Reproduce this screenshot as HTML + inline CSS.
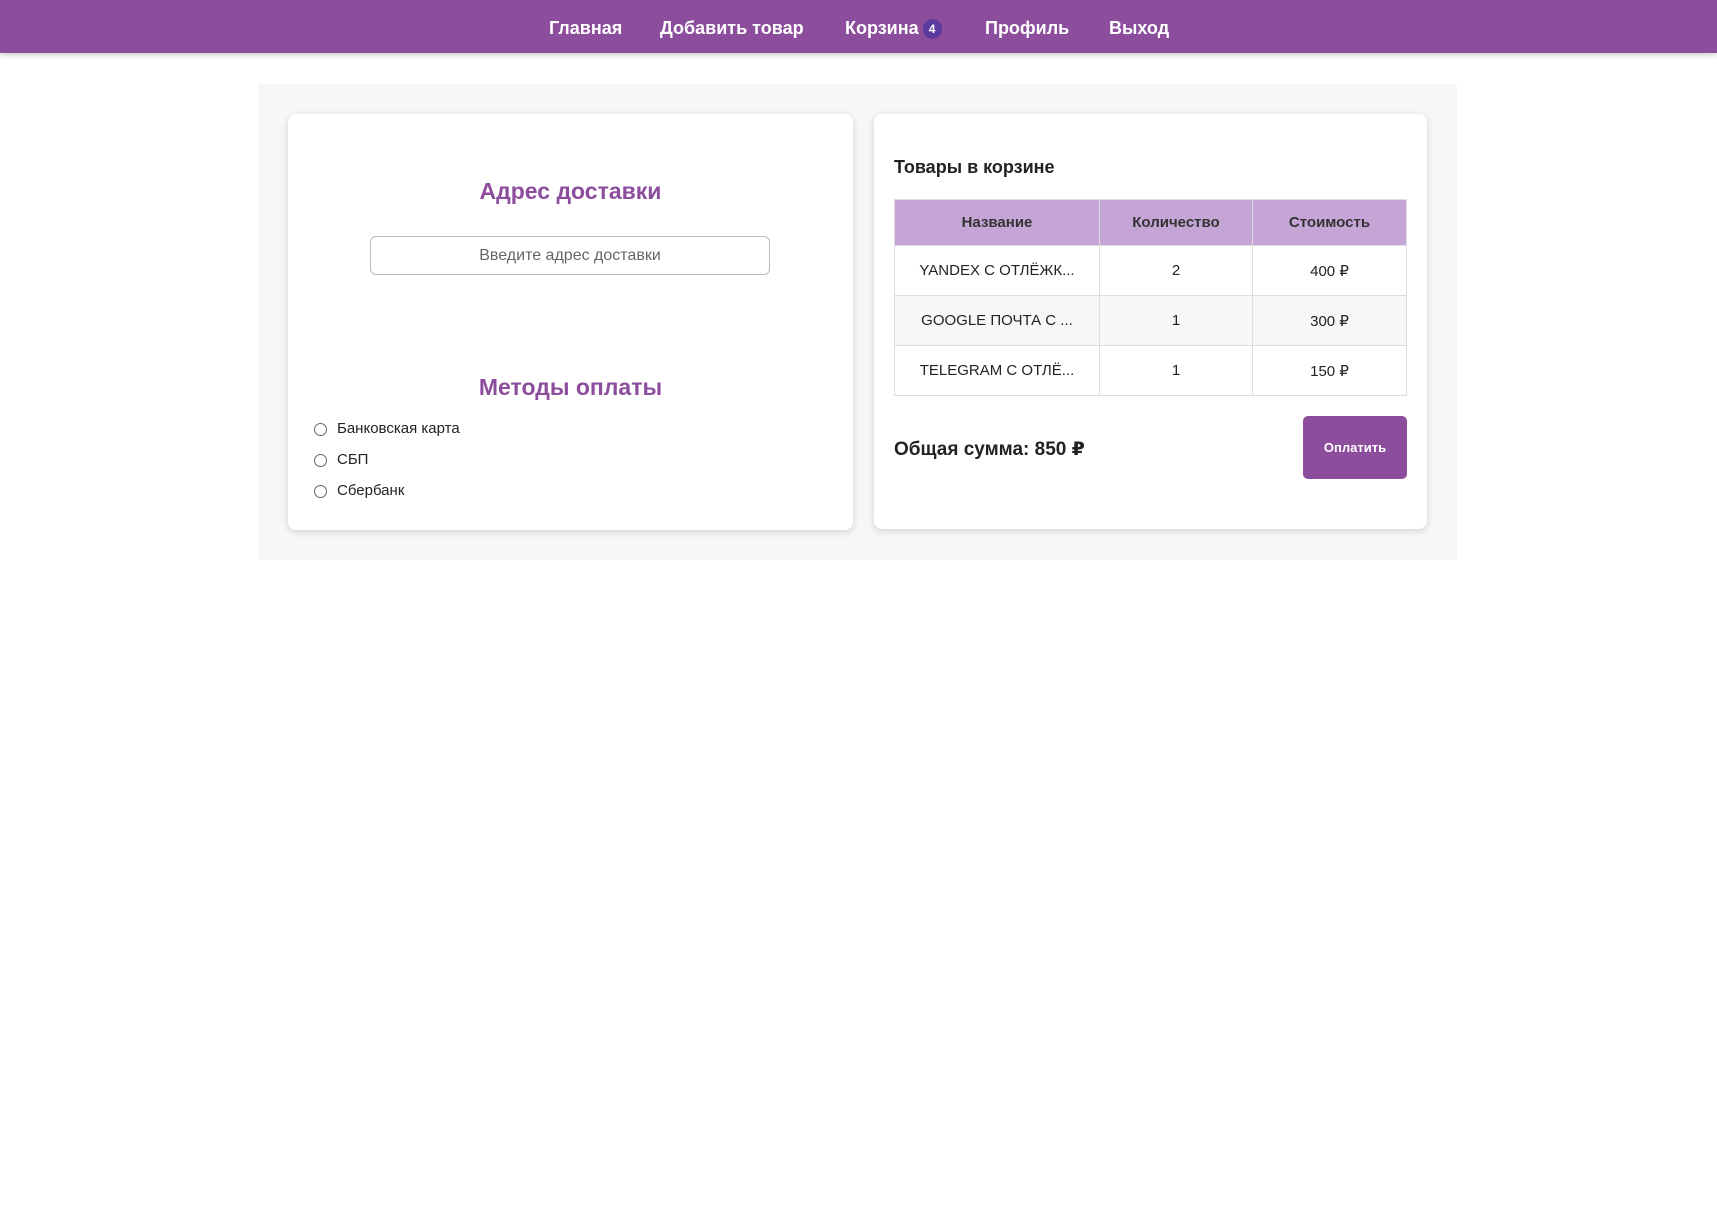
<!DOCTYPE html>
<html><head><meta charset="utf-8"><style>
*{box-sizing:border-box;margin:0;padding:0}
body{width:1717px;height:1222px;background:#fff;font-family:"Liberation Sans","DejaVu Sans",sans-serif;color:#222;position:relative;overflow:hidden}
nav{position:absolute;left:0;top:0;width:1717px;height:53px;background:#8c4d9c;box-shadow:0 2px 6px rgba(0,0,0,.2)}
nav span{position:absolute;top:18px;color:#fff;font-weight:bold;font-size:18px;white-space:nowrap}
.badge{display:inline-block;width:19px;height:20px;border-radius:10px;background:#5d3a9f;font-size:12px;text-align:center;line-height:20px;vertical-align:1px;margin-left:4px}
.wrap{position:absolute;left:258px;top:84px;width:1199px;height:476px;background:#f7f7f7}
.card{position:absolute;background:#fff;border-radius:8px;box-shadow:0 2px 8px rgba(0,0,0,.15)}
h2{position:absolute;left:0;width:100%;text-align:center;color:#8c4d9c;font-size:23px;font-weight:bold}
.inp{position:absolute;left:82px;top:122px;width:400px;height:39px;border:1px solid #bbb;border-radius:6px;text-align:center;line-height:37px;color:#666;font-size:16px}
.r{position:absolute;left:26px;font-size:15px;color:#222}
.r i{display:inline-block;width:13px;height:13px;border:1px solid #666;border-radius:50%;vertical-align:-3px;margin-right:10px}
table{position:absolute;left:20px;top:85px;width:513px;border-collapse:collapse;font-size:15px}
td,th{border:1px solid #ddd;text-align:center;height:50px}
th{background:#c5a5d5;height:46px;font-weight:bold;color:#333}
tr:nth-child(3) td{background:#f7f7f7}
.btn{position:absolute;left:429px;top:302px;width:104px;height:63px;background:#8c4d9c;border-radius:5px;color:#fff;font-weight:bold;font-size:13px;text-align:center;line-height:63px}
</style></head><body>
<nav>
<span style="left:549px">Главная</span>
<span style="left:660px">Добавить товар</span>
<span style="left:845px">Корзина<b class="badge">4</b></span>
<span style="left:985px">Профиль</span>
<span style="left:1109px">Выход</span>
</nav>
<div class="wrap"></div>
<div class="card" style="left:288px;top:114px;width:565px;height:416px">
<h2 style="top:64px">Адрес доставки</h2>
<div class="inp">Введите адрес доставки</div>
<h2 style="top:260px">Методы оплаты</h2>
<div class="r" style="top:306px"><i></i>Банковская карта</div>
<div class="r" style="top:337px"><i></i>СБП</div>
<div class="r" style="top:368px"><i></i>Сбербанк</div>
</div>
<div class="card" style="left:874px;top:114px;width:553px;height:415px">
<div style="position:absolute;left:20px;top:43px;font-size:18px;font-weight:bold">Товары в корзине</div>
<table>
<tr><th style="width:205px">Название</th><th style="width:153px">Количество</th><th>Стоимость</th></tr>
<tr><td>YANDEX С ОТЛЁЖК...</td><td>2</td><td>400 ₽</td></tr>
<tr><td>GOOGLE ПОЧТА С ...</td><td>1</td><td>300 ₽</td></tr>
<tr><td>TELEGRAM С ОТЛЁ...</td><td>1</td><td>150 ₽</td></tr>
</table>
<div style="position:absolute;left:20px;top:324px;font-size:19px;font-weight:bold">Общая сумма: 850 ₽</div>
<div class="btn">Оплатить</div>
</div>
</body></html>
